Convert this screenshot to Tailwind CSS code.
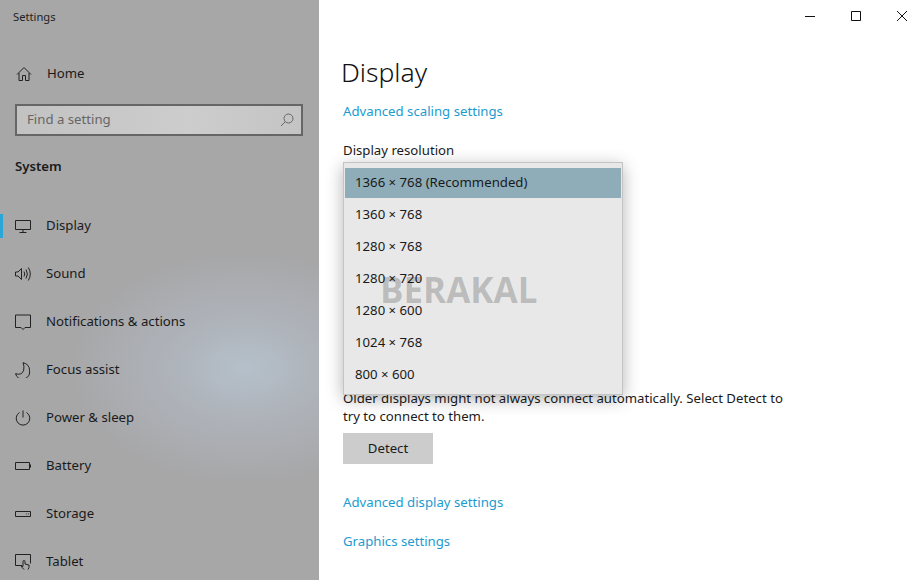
<!DOCTYPE html>
<html lang="en">
  <head>
    <meta charset="UTF-8" />
    <title>Settings</title>
    <script src="https://cdn.jsdelivr.net/npm/@tailwindcss/browser@4"></script>
  </head>
  <body class="bg-white">
    <div class="flex h-[580px] w-[918px] overflow-hidden font-['Noto_Sans',sans-serif] text-[13.2px] text-[#1a1a1a]">
      <!-- Sidebar -->
      <aside class="relative h-full w-[319px] shrink-0 bg-[radial-gradient(ellipse_175px_115px_at_245px_368px,#b5c0ca_0%,#aeb2b9_45%,#a7a7a8_100%)]">
        <div class="flex h-[34px] items-center pl-[13px] text-[11.2px] text-[#222]">Settings</div>
        <div class="mt-[22px] flex h-[36px] items-center pl-[16px]">
          <svg class="h-[16px] w-[16px]" viewBox="0 0 16 16" fill="none" stroke="#222" stroke-width="1"><path d="M1 8.500 8 1.500l7 7M3 7v7.500h3.500V9.500h3v5H13V7" /></svg>
          <span class="ml-[15px] text-[#1a1a1a]">Home</span>
        </div>
        <div class="ml-[15px] mt-[12px] flex h-[32px] w-[288px] items-center justify-between border-2 border-[#666] bg-[linear-gradient(90deg,#c2c2c2,#cdcdcd_60%,#c4c4c4)] pl-[10px] pr-[7px] text-[#666]">
          <span>Find a setting</span>
          <svg class="h-[14px] w-[14px]" viewBox="0 0 14 14" fill="none" stroke="#666" stroke-width="1"><circle cx="8.500" cy="5.500" r="4.500" /><path d="M5.300 8.700 1 13" /></svg>
        </div>
        <div class="mt-[21px] pl-[15px] font-semibold text-[#1a1a1a]">System</div>
        <nav class="mt-[25px]">
          <div class="relative flex h-[48px] items-center pl-[15px]">
            <span class="absolute left-0 top-[12px] h-[24px] w-[3px] bg-[#2aa7d6]"></span>
            <svg class="h-[16px] w-[16px]" viewBox="0 0 16 16" fill="none" stroke="#222" stroke-width="1"><path d="M.5 2.500h15v9H.5zM8 11.500v2.500M4.500 14.500h7" /></svg>
            <span class="ml-[15px]">Display</span>
          </div>
          <div class="flex h-[48px] items-center pl-[15px]">
            <svg class="h-[16px] w-[16px]" viewBox="0 0 16 16" fill="none" stroke="#222" stroke-width="1"><path d="M.5 6h2.500L6.500 2.500v11L3 10H.5zM9 5.500q1.500 2.500 0 5M11 3.500q2.800 4.500 0 9M13.300 1.500q4 6.500 0 13" /></svg>
            <span class="ml-[15px]">Sound</span>
          </div>
          <div class="flex h-[48px] items-center pl-[15px]">
            <svg class="h-[16px] w-[16px]" viewBox="0 0 16 16" fill="none" stroke="#222" stroke-width="1"><path d="M.5 1h15v12.500H10L8 15.500l-2-2H.5z" /></svg>
            <span class="ml-[15px]">Notifications &amp; actions</span>
          </div>
          <div class="flex h-[48px] items-center pl-[15px]">
            <svg class="h-[16px] w-[16px]" viewBox="0 0 16 16" fill="none" stroke="#222" stroke-width="1"><path d="M8 .7q6.500 1.500 6.500 7.500a6.800 6.800 0 0 1-14 3.500q6.500 2 8.200-3.500Q9.500 4 8 .7z" /></svg>
            <span class="ml-[15px]">Focus assist</span>
          </div>
          <div class="flex h-[48px] items-center pl-[15px]">
            <svg class="h-[16px] w-[16px]" viewBox="0 0 16 16" fill="none" stroke="#222" stroke-width="1"><path d="M4.500 2.500a6.800 6.800 0 1 0 7 0M8 .5v7" /></svg>
            <span class="ml-[15px]">Power &amp; sleep</span>
          </div>
          <div class="flex h-[48px] items-center pl-[15px]">
            <svg class="h-[16px] w-[16px]" viewBox="0 0 16 16" fill="none" stroke="#222" stroke-width="1"><path d="M.5 4.500h14v7H.5zM15.500 6.500v3" /></svg>
            <span class="ml-[15px]">Battery</span>
          </div>
          <div class="flex h-[48px] items-center pl-[15px]">
            <svg class="h-[16px] w-[16px]" viewBox="0 0 16 16" fill="none" stroke="#222" stroke-width="1"><path d="M.5 5.500h15v5H.5zM11 8h.8M13 8h.8" /></svg>
            <span class="ml-[15px]">Storage</span>
          </div>
          <div class="flex h-[48px] items-center pl-[15px]">
            <svg class="h-[16px] w-[16px]" viewBox="0 0 16 16" fill="none" stroke="#222" stroke-width="1"><path d="M7 11.500H.5v-11h15v9M9 15.500q-2.500-2-2.500-3.500l1.500.5V7.500a1 1 0 0 1 2 0V10l4 1v2.500l-1 2" /></svg>
            <span class="ml-[15px]">Tablet</span>
          </div>
        </nav>
      </aside>

      <!-- Main -->
      <main class="relative h-full flex-1 bg-white">
        <!-- Window controls -->
        <div class="mr-[-7px] flex h-[32px] justify-end">
          <div class="flex w-[46px] items-center justify-center"><svg class="h-[10px] w-[10px]" viewBox="0 0 10 10" stroke="#111"><path d="M0 5.500h10" /></svg></div>
          <div class="flex w-[46px] items-center justify-center"><svg class="h-[10px] w-[10px]" viewBox="0 0 10 10" fill="none" stroke="#111"><path d="M.5.500h9v9h-9z" /></svg></div>
          <div class="flex w-[46px] items-center justify-center"><svg class="h-[10px] w-[10px]" viewBox="0 0 10 10" stroke="#111"><path d="m0 0 10 10M10 0 0 10" /></svg></div>
        </div>

        <div class="pl-[22px]">
          <h1 class="mt-[20px] h-[40px] text-[26.500px] font-light leading-[40px] text-[#111]">Display</h1>
          <a class="ml-[2px] mt-[9px] block leading-[20px] text-[#1b9bd0]">Advanced scaling settings</a>
          <p class="ml-[2px] mt-[19px] leading-[20px]">Display resolution</p>
          <p class="ml-[2px] mt-[229px] w-[450px] leading-[18px]">Older displays might not always connect automatically. Select Detect to try to connect to them.</p>
          <button class="ml-[2px] mt-[8px] block h-[31px] w-[90px] bg-[#cccccc] pt-[1px] text-center">Detect</button>
          <a class="ml-[2px] mt-[28px] block leading-[20px] text-[#1b9bd0]">Advanced display settings</a>
          <a class="ml-[2px] mt-[19px] block leading-[20px] text-[#1b9bd0]">Graphics settings</a>
        </div>

        <!-- Resolution dropdown -->
        <div class="absolute left-[24px] top-[162px] w-[280px] border border-[#c4c4c4] bg-[#e8e8e8] px-[1px] pb-[2px] pt-[5px] shadow-[0_4px_16px_rgba(0,0,0,0.3)]">
          <div class="mb-[2px] flex h-[30px] items-center bg-[#8fadb9] pb-[1px] pl-[10px]">1366 × 768 (Recommended)</div>
          <div class="flex h-[32px] items-center pb-[3px] pl-[10px]">1360 × 768</div>
          <div class="flex h-[32px] items-center pb-[3px] pl-[10px]">1280 × 768</div>
          <div class="flex h-[32px] items-center pb-[3px] pl-[10px]">1280 × 720</div>
          <div class="flex h-[32px] items-center pb-[3px] pl-[10px]">1280 × 600</div>
          <div class="flex h-[32px] items-center pb-[3px] pl-[10px]">1024 × 768</div>
          <div class="flex h-[32px] items-center pb-[3px] pl-[10px]">800 × 600</div>
          <!-- Watermark -->
          <span class="absolute left-[36px] top-[107px] font-['Open_Sans',sans-serif] text-[35px] font-bold leading-[40px] text-black/20">BERAKAL</span>
        </div>
      </main>
    </div>
  </body>
</html>
